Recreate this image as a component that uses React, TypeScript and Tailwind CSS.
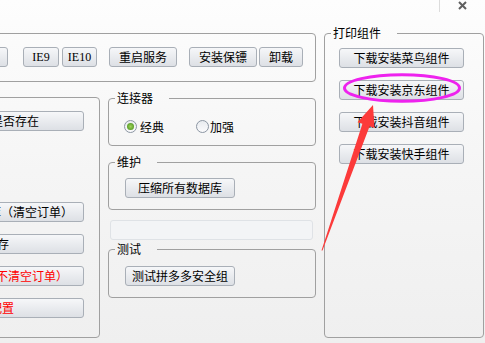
import React from "react";

function Btn({ className = "", children }: { className?: string; children?: React.ReactNode }) {
  return (
    <button
      type="button"
      className={`flex items-center h-[20px] rounded-[3px] border border-[#a9afb7] bg-linear-to-b from-[#f6f7f9] to-[#dde0e5] text-[12px] leading-[14px] whitespace-nowrap overflow-hidden shrink-0 ${className}`}
    >
      {children}
    </button>
  );
}

function Radio({ checked }: { checked?: boolean }) {
  return (
    <div className="w-[13px] h-[13px] rounded-full border border-[#8c96a3] bg-linear-to-b from-[#e8ebef] to-[#fbfbfc] flex items-center justify-center shrink-0">
      {checked && (
        <div className="w-[7px] h-[7px] rounded-full bg-radial from-[#9fd35a] to-[#3f8a10]" />
      )}
    </div>
  );
}

function Legend({ children }: { children: React.ReactNode }) {
  return <legend className="ml-[6px] pl-[2px] pr-[16px] leading-[14px] text-[12px]">{children}</legend>;
}

export default function App() {
  return (
    <div className="relative w-[485px] h-[343px] overflow-hidden bg-linear-to-b from-[#fdfdfd] via-[#f5f5f5] to-[#efefef] font-['Noto_Sans_CJK_SC','Noto_Sans',sans-serif] text-[12px] text-black">
      {/* title strip */}
      <div className="h-[26px] flex justify-end items-start">
        <div className="w-px h-[12px] bg-[#dcdcdc]" />
        <div className="w-[45px] flex justify-center pt-[1px]">
          <svg width="9" height="9" viewBox="0 0 9 9">
            <path d="M1 1 L8 8 M8 1 L1 8" stroke="#5f5f5f" strokeWidth="2" />
          </svg>
        </div>
      </div>

      <div className="flex items-start">
        {/* left column */}
        <div className="-ml-[20px] w-[336px] flex flex-col shrink-0">
          <div className="mt-[7px] h-[49px] border border-[#a0a0a0] rounded-[4px] flex items-start pt-[13px]">
            <Btn className="ml-[7px] w-[20px]" />
            <Btn className="ml-[15px] w-[36px] justify-center font-['Liberation_Serif',serif]">IE9</Btn>
            <Btn className="ml-[3px] w-[35px] justify-center font-['Liberation_Serif',serif]">IE10</Btn>
            <Btn className="ml-[12px] w-[68px] justify-center">重启服务</Btn>
            <Btn className="ml-[12px] w-[68px] justify-center">安装保镖</Btn>
            <Btn className="ml-[2px] w-[44px] justify-center">卸载</Btn>
          </div>

          <div className="mt-[9px] flex items-start">
            {/* left panel */}
            <div className="mt-[6px] w-[120px] h-[241px] border border-[#a0a0a0] rounded-[4px] pl-[8px] pr-[15px] flex flex-col shrink-0">
              <Btn className="mt-[13px] w-full justify-end pr-[44px]">检查数据库是否存在</Btn>
              <Btn className="mt-[71px] w-full justify-end pr-[10px]">清空数据库（清空订单）</Btn>
              <Btn className="mt-[12px] w-full justify-end pr-[74px]">清除缓存</Btn>
              <Btn className="mt-[12px] w-full justify-end pr-[15px] text-[#ff0000]">清空数据库（不清空订单）</Btn>
              <Btn className="mt-[12px] w-full justify-end pr-[69px] text-[#ff0000]">恢复默认配置</Btn>
            </div>

            {/* middle column */}
            <div className="ml-[8px] w-[208px] flex flex-col shrink-0">
              <fieldset className="h-[55px] border border-[#a0a0a0] rounded-[4px]">
                <Legend>连接器</Legend>
                <div className="mt-[15px] pl-[15px] flex items-center h-[13px]">
                  <Radio checked />
                  <span className="ml-[3px] leading-[14px]">经典</span>
                  <div className="ml-[32px]">
                    <Radio />
                  </div>
                  <span className="ml-[1px] leading-[14px]">加强</span>
                </div>
              </fieldset>

              <fieldset className="mt-[9px] h-[55px] border border-[#a0a0a0] rounded-[4px]">
                <Legend>维护</Legend>
                <div className="mt-[9px] pl-[16px] flex">
                  <Btn className="w-[110px] justify-center">压缩所有数据库</Btn>
                </div>
              </fieldset>

              <div className="mt-[10px] ml-[2px] w-[203px] h-[20px] rounded-[3px] border border-[#dfe2e6] bg-[#f3f4f6]" />

              <fieldset className="mt-[2px] h-[56px] border border-[#a0a0a0] rounded-[4px]">
                <Legend>测试</Legend>
                <div className="mt-[10px] pl-[16px] flex">
                  <Btn className="w-[110px] justify-center">测试拼多多安全组</Btn>
                </div>
              </fieldset>
            </div>
          </div>
        </div>

        {/* right column */}
        <fieldset className="ml-[8px] w-[160px] h-[312px] border border-[#a0a0a0] rounded-[4px] shrink-0">
          <Legend>打印组件</Legend>
          <div className="pt-[8px] pl-[14px] flex flex-col gap-[12px]">
            <Btn className="w-[125px] justify-center">下载安装菜鸟组件</Btn>
            <Btn className="w-[125px] justify-center">下载安装京东组件</Btn>
            <Btn className="w-[125px] justify-center">下载安装抖音组件</Btn>
            <Btn className="w-[125px] justify-center">下载安装快手组件</Btn>
          </div>
        </fieldset>
      </div>

      {/* annotation overlay */}
      <svg className="absolute inset-0 pointer-events-none" width="485" height="343" viewBox="0 0 485 343">
        <ellipse cx="402" cy="88" rx="57.5" ry="13.3" fill="none" stroke="#ee22ee" strokeWidth="3" />
        <polygon
          points="321.5,250.5 362.4,123.8 357.5,122.2 373,105 374.5,128 369.6,126.3 322.5,250.5"
          fill="#fc3a3a"
        />
      </svg>
    </div>
  );
}
